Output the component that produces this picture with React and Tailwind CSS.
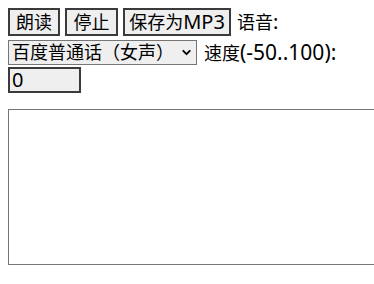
import { ChevronDown } from "lucide-react";

const font = { fontFamily: '"Noto Sans", "Noto Sans CJK SC", sans-serif' };

function Btn({ children, w }) {
  return (
    <button
      className={`h-[28px] ${w} border-2 border-[#3b3b3b] bg-[#efefef] text-[18px] leading-none text-black flex items-center justify-center px-1`}
    >
      {children}
    </button>
  );
}

export default function App() {
  return (
    <div className="w-[374px] h-[284px] overflow-hidden bg-white p-2 text-black text-[18px]" style={font}>
      <div className="flex items-center gap-[5px] h-[28px]">
        <Btn w="w-[52px]">朗读</Btn>
        <Btn w="w-[53px]">停止</Btn>
        <Btn w="w-[108px]">
          保存为<span className="text-[20px]">MP3</span>
        </Btn>
        <span className="ml-[1px] leading-none">
          语音<span className="text-[20px]">:</span>
        </span>
      </div>
      <div className="flex items-center gap-[7px] mt-[3px] h-[26px]">
        <div className="w-[189px] h-[25px] border border-[#767676] bg-[#efefef] flex items-center justify-between pl-[3px] pr-[3px]">
          <span className="leading-none">百度普通话（女声）</span>
          <ChevronDown size={13} strokeWidth={3.5} />
        </div>
        <span className="leading-none">
          速度<span className="text-[21px]">(-50..100):</span>
        </span>
      </div>
      <div className="mt-[2px] w-[73px] h-[26px] border-2 border-[#3b3b3b] bg-[#efefef] flex items-center pl-[2px]">
        <span className="leading-none text-[20px]">0</span>
      </div>
      <div className="mt-[16px] w-[420px] h-[156px] border border-[#767676] bg-white"></div>
    </div>
  );
}
